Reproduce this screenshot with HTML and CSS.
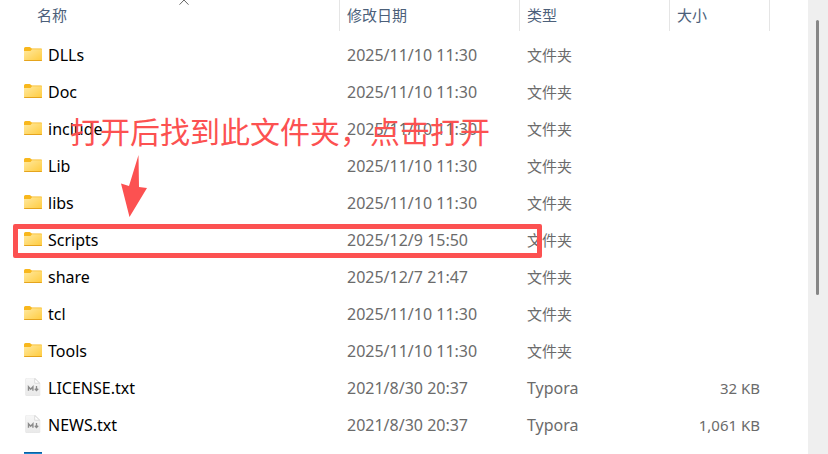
FILE: index.html
```html
<!DOCTYPE html>
<html lang="zh-CN">
<head>
<meta charset="utf-8">
<title>Python</title>
<link rel="stylesheet" href="styles.css">
</head>
<body>
<svg class="defs" aria-hidden="true">
  <defs>
    <linearGradient id="folder-face" x1="0" y1="0" x2="1" y2="1">
      <stop offset="0" stop-color="#ffe9a0"/>
      <stop offset="1" stop-color="#ffcb3d"/>
    </linearGradient>
    <linearGradient id="page-face" x1="0" y1="0" x2="0" y2="1">
      <stop offset="0" stop-color="#f7f7f7"/>
      <stop offset="1" stop-color="#e9e9e9"/>
    </linearGradient>
    <symbol id="folder" viewBox="0 0 18 18">
      <path d="M0 3.5V2.5Q0 1 1.5 1H5.5Q6.3 1 7 2L8 2.6H17.2Q18 2.6 18 3.4V8H0Z" fill="#f8b71c"/>
      <path d="M0 5H6.5L8 3.3H18V14.2Q18 15 17.2 15H.8Q0 15 0 14.2Z" fill="url(#folder-face)"/>
      <path d="M0 14H18V14.2Q18 15 17.2 15H.8Q0 15 0 14.2Z" fill="#e5a41d"/>
    </symbol>
    <symbol id="markdown" viewBox="0 0 18 18">
      <path d="M3 0H11L16 5V16.5Q16 18 14.5 18H3Q1.5 18 1.5 16.5V1.5Q1.5 0 3 0Z" fill="url(#page-face)" stroke="#e2e2e2" stroke-width=".5"/>
      <path d="M10.7 .5V5.2H15.6Z" fill="#fff" stroke="#cfcfcf" stroke-width=".7"/>
      <path d="M4.5 12.8V8.8L6.7 11.2L8.9 8.8V12.8" fill="none" stroke="#8a8a8a" stroke-width="1.4"/>
      <path d="M12.5 8V12.5M10.8 10.8L12.5 12.6L14.2 10.8" fill="none" stroke="#8a8a8a" stroke-width="1.3"/>
    </symbol>
    <symbol id="app" viewBox="0 0 18 18">
      <path d="M0 0H18V17H0Z" fill="#1b86d0"/>
      <path d="M0 0H18V1H0Z" fill="#0c61a0"/>
    </symbol>
  </defs>
</svg>
<main class="explorer">
  <div class="list">
    <table class="files">
      <colgroup><col class="col-name"><col class="col-date"><col class="col-type"><col class="col-size"><col></colgroup>
      <thead>
        <tr>
          <th class="sorted" aria-sort="ascending"><button type="button">名称</button>
            <svg class="sort" viewBox="0 0 10 6" aria-hidden="true"><path d="M.5 4.7L5 0L9.5 4.7" fill="none" stroke="#666"/></svg></th>
          <th><button type="button">修改日期</button></th>
          <th><button type="button">类型</button></th>
          <th><button type="button">大小</button></th>
          <td></td>
        </tr>
      </thead>
      <tbody>
        <tr><td class="name"><svg class="icon"><use href="#folder"/></svg>DLLs</td><td class="date">2025/11/10 11:30</td><td>文件夹</td><td class="size"></td></tr>
        <tr><td class="name"><svg class="icon"><use href="#folder"/></svg>Doc</td><td class="date">2025/11/10 11:30</td><td>文件夹</td><td class="size"></td></tr>
        <tr><td class="name"><svg class="icon"><use href="#folder"/></svg>include</td><td class="date">2025/11/10 11:30</td><td>文件夹</td><td class="size"></td></tr>
        <tr><td class="name"><svg class="icon"><use href="#folder"/></svg>Lib</td><td class="date">2025/11/10 11:30</td><td>文件夹</td><td class="size"></td></tr>
        <tr><td class="name"><svg class="icon"><use href="#folder"/></svg>libs</td><td class="date">2025/11/10 11:30</td><td>文件夹</td><td class="size"></td></tr>
        <tr><td class="name"><svg class="icon"><use href="#folder"/></svg>Scripts</td><td class="date">2025/12/9 15:50</td><td>文件夹</td><td class="size"></td></tr>
        <tr><td class="name"><svg class="icon"><use href="#folder"/></svg>share</td><td class="date">2025/12/7 21:47</td><td>文件夹</td><td class="size"></td></tr>
        <tr><td class="name"><svg class="icon"><use href="#folder"/></svg>tcl</td><td class="date">2025/11/10 11:30</td><td>文件夹</td><td class="size"></td></tr>
        <tr><td class="name"><svg class="icon"><use href="#folder"/></svg>Tools</td><td class="date">2025/11/10 11:30</td><td>文件夹</td><td class="size"></td></tr>
        <tr><td class="name"><svg class="icon document"><use href="#markdown"/></svg>LICENSE.txt</td><td class="date">2021/8/30 20:37</td><td class="program">Typora</td><td class="size">32 KB</td></tr>
        <tr><td class="name"><svg class="icon document"><use href="#markdown"/></svg>NEWS.txt</td><td class="date">2021/8/30 20:37</td><td class="program">Typora</td><td class="size">1,061 KB</td></tr>
        <tr><td class="name"><svg class="icon document"><use href="#app"/></svg></td><td class="date"></td><td></td><td class="size"></td></tr>
      </tbody>
    </table>
  </div>
  <div class="scrollbar" aria-hidden="true"><div class="thumb"></div></div>
  <p class="note">打开后找到此文件夹，点击打开</p>
  <svg class="arrow" viewBox="0 0 26 63" aria-hidden="true"><path d="M17.5 0L18 32L26 33L8.5 62L0 28.5L8 31Z" fill="#fc5151"/></svg>
  <div class="highlight"></div>
</main>
</body>
</html>
```

FILE: styles.css
```css
* {
  box-sizing: border-box;
}

body {
  margin: 0;
  background: #fff;
  color: #6b6b6b;
  font: 15px/20px "Noto Sans", "Noto Sans CJK SC", sans-serif;
}

.defs {
  position: absolute;
  width: 0;
  height: 0;
}

.explorer {
  position: relative;
  display: flex;
  height: 100vh;
  overflow: hidden;
}

.list {
  flex: 1;
  min-width: 0;
  overflow: hidden;
}

.files {
  width: 100%;
  table-layout: fixed;
  border-collapse: separate;
  border-spacing: 0;
}

.col-name { width: 340px; }
.col-date { width: 180px; }
.col-type { width: 150px; }
.col-size { width: 100px; }

.files td,
.files th {
  padding: 0 7px;
  white-space: nowrap;
}

.files th {
  position: relative;
  height: 31px;
  padding-bottom: 2px;
  border-right: 1px solid #e5e5e5;
  text-align: left;
}

.files th button {
  display: block;
  padding: 0;
  border: 0;
  background: none;
  color: #4c607a;
  font: 400 15px/20px "Noto Sans CJK SC", sans-serif;
}

.files th.sorted {
  padding-left: 37px;
}

.sort {
  position: absolute;
  top: 0;
  left: 179px;
  width: 10px;
  height: 6px;
}

.files tbody::before {
  content: "";
  display: block;
  height: 5px;
}

.files tbody td {
  height: 37px;
}

.files tbody .name {
  padding-left: 24px;
  color: #000;
  font-size: 16px;
}

.files tbody .date,
.files tbody .program {
  font-size: 16px;
}

.files tbody .size {
  padding-right: 10px;
  text-align: right;
}

.icon {
  width: 18px;
  height: 18px;
  margin-right: 6px;
  vertical-align: -3px;
}

.icon.document {
  vertical-align: -2px;
}

.scrollbar {
  width: 20px;
  padding: 20px 0 0 8px;
  background: #efefef;
}

.thumb {
  width: 3px;
  height: 275px;
  border-radius: 2px;
  background: #868686;
}

.note {
  position: absolute;
  top: 110px;
  left: 70px;
  margin: 0;
  color: #fc5151;
  font: 400 30px/40px "Noto Sans CJK SC", sans-serif;
  white-space: nowrap;
}

.arrow {
  position: absolute;
  top: 155px;
  left: 121px;
  width: 26px;
  height: 63px;
}

.highlight {
  position: absolute;
  top: 224px;
  left: 13px;
  width: 529px;
  height: 34px;
  border: 5px solid #fc5151;
  border-radius: 2px;
}
```
